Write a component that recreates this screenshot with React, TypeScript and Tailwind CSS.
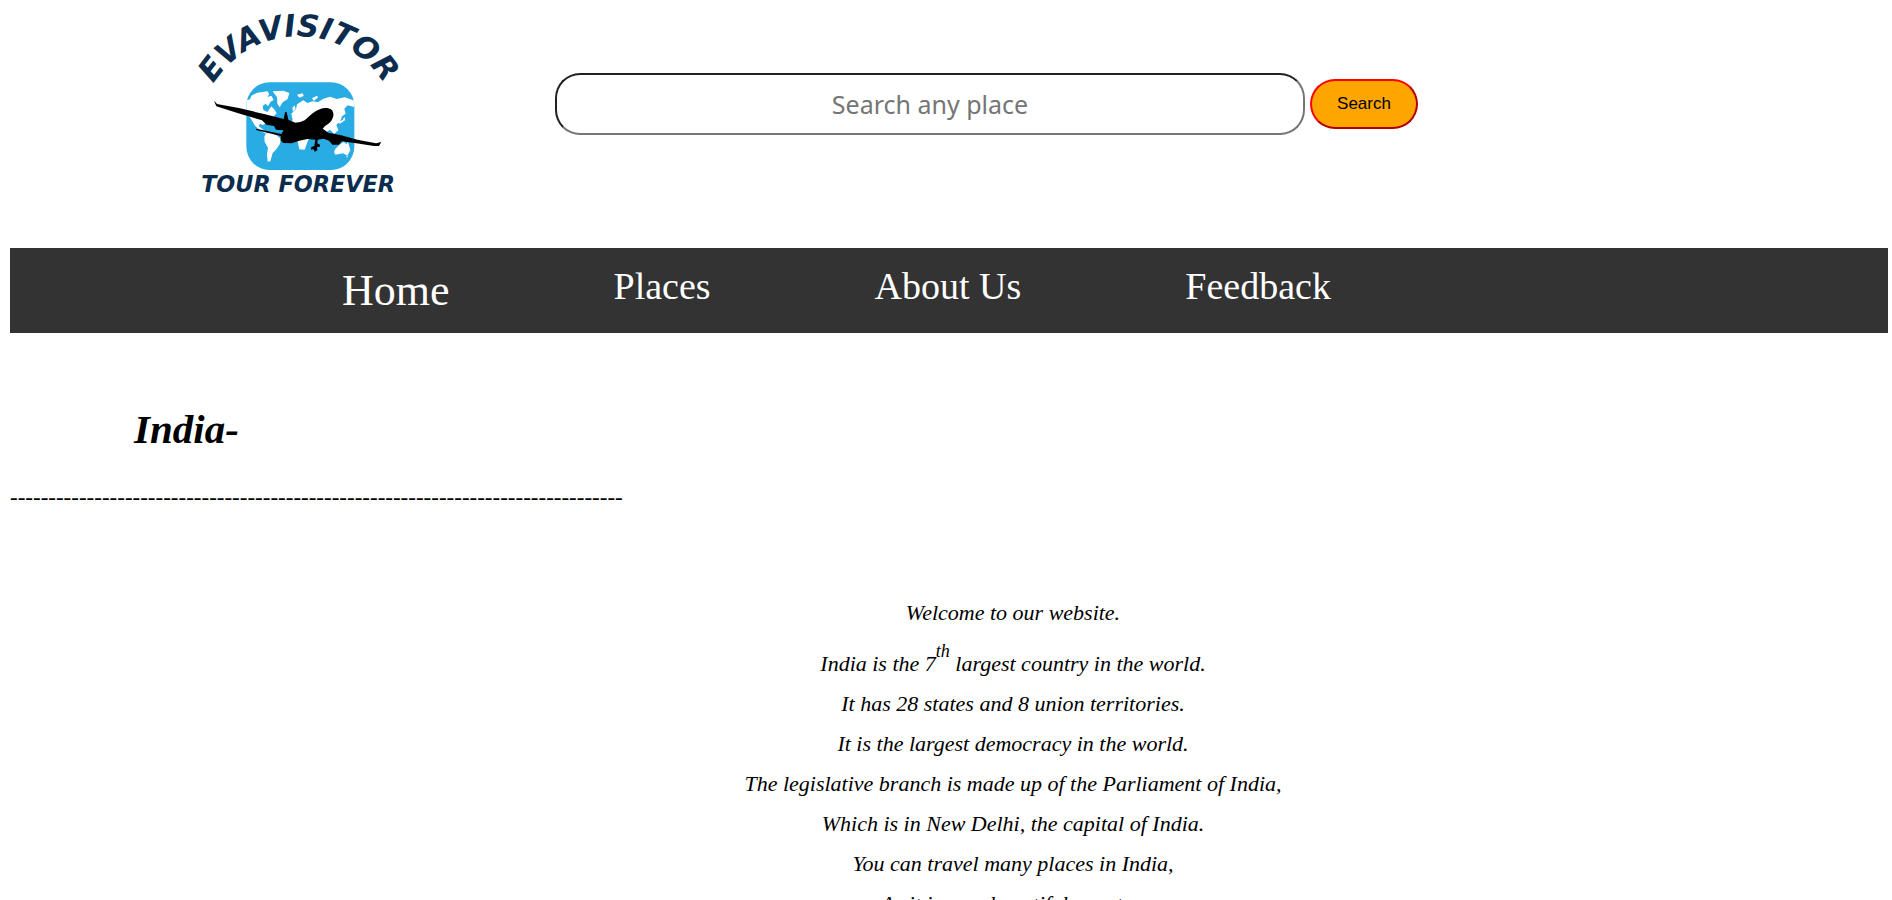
import React from "react";

const navItems = [
  { label: "Home", href: "#home", size: "text-[44px] leading-[52px]" },
  { label: "Places", href: "#places", size: "text-[38px] leading-[42px]" },
  { label: "About Us", href: "#about", size: "text-[38px] leading-[42px]" },
  { label: "Feedback", href: "#feedback", size: "text-[38px] leading-[42px]" },
];

function Logo() {
  return (
    <svg
      viewBox="0 0 720 630"
      className="h-[210px] w-[240px] shrink-0"
      role="img"
      aria-label="Evavisitor, tour forever"
    >
      <defs>
        <path id="arc" d="M86 278 A300 300 0 0 1 626 278" />
        <clipPath id="tile">
          <rect x="199" y="247" width="324" height="263" rx="70" />
        </clipPath>
      </defs>
      <text
        fill="#0b2c4d"
        fontFamily="DejaVu Sans, sans-serif"
        fontWeight="700"
        fontStyle="italic"
        fontSize="92"
        textAnchor="middle"
      >
        <textPath href="#arc" startOffset="50%">EVAVISITOR</textPath>
      </text>
      <rect x="199" y="247" width="324" height="263" rx="70" fill="#29abe4" />
      <g clipPath="url(#tile)" fill="#fff">
        <path d="M196 302 L210 298 L214 287 L232 278 L262 274 L268 282 L262 291 L274 287 L281 300 L272 305 L264 319 L257 311 L248 318 L250 330 L262 336 L274 319 L284 329 L290 340 L282 348 L268 354 L262 368 L248 375 L240 371 L236 378 L246 386 L258 395 L263 402 L253 399 L238 390 L224 376 L212 355 L198 340 Z" />
        <path d="M278 274 L310 272 L328 279 L323 297 L308 307 L299 322 L292 311 L291 292 Z" />
        <path d="M257 401 L272 397 L290 406 L302 416 L300 431 L289 448 L278 459 L271 484 L263 485 L261 463 L264 444 L254 425 L253 410 Z" />
        <path d="M334 341 L348 328 L351 313 L370 301 L382 309 L398 304 L414 307 L430 296 L450 290 L470 297 L494 292 L527 303 L525 322 L503 316 L493 326 L497 341 L486 349 L481 364 L469 374 L475 391 L462 402 L450 389 L437 398 L424 377 L410 388 L394 400 L382 427 L374 449 L358 448 L352 420 L337 401 L328 376 L338 360 Z" />
        <path d="M351 284 L368 280 L371 288 L358 293 Z M396 295 L411 287 L414 292 L402 303 Z M337 323 L344 316 L347 327 L339 335 Z" />
        <path d="M466 447 L480 433 L492 425 L499 433 L504 426 L511 450 L502 467 L489 460 L466 464 L462 456 Z M499 468 L504 469 L501 474 Z" />
        <path d="M480 410 L493 408 L508 421 L493 419 Z M474 367 L488 360 L493 350 L496 360 L480 371 Z" />
      </g>
      <path
        d="M102 302 L108 308 L111 312 L180 325 L252 342 L311 357 L315 337 L320 336 L325 359 L346 368 Q362 368 374 361 L396 341 C418 324 440 319 455 329 C466 341 460 365 435 378 L428 386 L445 398 L484 406 L532 419 L588 430 L604 426 L597 438 L582 438 L529 430 L485 424 L477 434 L457 434 L447 422 L431 416 L413 419 L412 430 L420 434 L419 441 L411 441 L412 451 L404 455 L401 448 L393 449 L394 441 L403 438 L406 419 L382 417 L358 422 L335 430 L309 429 L302 421 L302 408 L228 390 L229 386 L304 402 L311 391 L288 389 L282 378 L259 374 L246 361 L170 338 L109 319 Z"
        fill="#000"
      />
      <text
        x="354"
        y="577"
        fill="#0b2c4d"
        fontFamily="DejaVu Sans, sans-serif"
        fontWeight="700"
        fontStyle="italic"
        fontSize="67"
        textAnchor="middle"
      >
        TOUR FOREVER
      </text>
    </svg>
  );
}

export default function App() {
  return (
    <div className="bg-white pr-1 pl-[10px] font-['Liberation_Serif',serif] text-black">
      <header className="flex items-start pb-[38px] pl-[170px]">
        <Logo />
        <form
          className="ml-[135px] flex items-center gap-[5px] pt-[73px]"
          onSubmit={(event) => event.preventDefault()}
        >
          <input
            type="text"
            aria-label="Search any place"
            placeholder="Search any place"
            className="h-[62px] w-[750px] rounded-[25px] border-2 border-t-[#212121] border-r-[#767676] border-b-[#767676] border-l-[#212121] px-1 text-center font-['Noto_Sans',sans-serif] text-[25px] placeholder:text-[#757575]"
          />
          <button
            type="submit"
            className="h-[50px] w-[108px] rounded-[25px] border-2 border-t-[#ff0000] border-r-[#b20000] border-b-[#b20000] border-l-[#ff0000] bg-[#ffa500] font-['Liberation_Sans',sans-serif] text-[17px]"
          >
            Search
          </button>
        </form>
      </header>

      <nav className="flex items-start gap-[164px] bg-[#333333] pt-[17px] pb-4 pl-[332px] text-white">
        {navItems.map((item) => (
          <a key={item.label} href={item.href} className={item.size}>
            {item.label}
          </a>
        ))}
      </nav>

      <main>
        <h1 className="pt-[72px] pl-[124px] text-[41px] leading-[48px] font-bold italic">
          India-
        </h1>
        <p className="pt-[27px] text-[23px] leading-[36px]">{"-".repeat(80)}</p>
        <div className="pt-[77px] pl-[128px] text-center text-[22px] leading-[40px] italic">
          <p>Welcome to our website.</p>
          <p className="pt-[9px]">
            India is the 7
            <sup className="static align-[14px] text-[18px] leading-none">th</sup>{" "}
            largest country in the world.
          </p>
          <p>It has 28 states and 8 union territories.</p>
          <p>It is the largest democracy in the world.</p>
          <p>The legislative branch is made up of the Parliament of India,</p>
          <p>Which is in New Delhi, the capital of India.</p>
          <p>You can travel many places in India,</p>
          <p>As it is very beautiful country.</p>
        </div>
      </main>
    </div>
  );
}
